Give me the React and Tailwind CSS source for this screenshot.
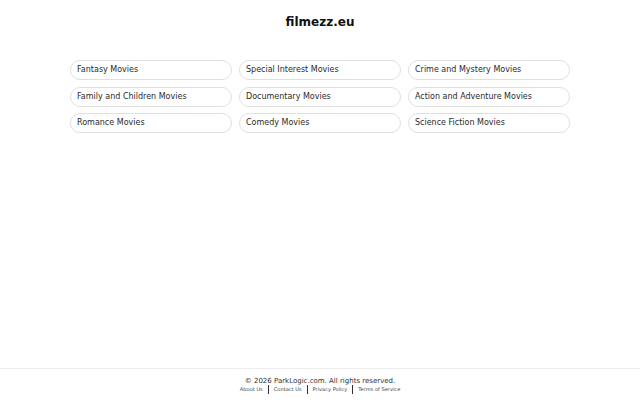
import React from "react";

const categories = [
    "Fantasy Movies",
    "Special Interest Movies",
    "Crime and Mystery Movies",
    "Family and Children Movies",
    "Documentary Movies",
    "Action and Adventure Movies",
    "Romance Movies",
    "Comedy Movies",
    "Science Fiction Movies",
];

const links = ["About Us", "Contact Us", "Privacy Policy", "Terms of Service"];

function App() {
    return (
        <div className="flex flex-col min-h-screen bg-white text-[#222] font-['DejaVu_Sans',sans-serif]">
            <main className="flex-grow">
                <h1 className="text-center font-bold text-[12px] leading-[16px] pt-[14px] text-[#111]">filmezz.eu</h1>

                <div className="w-[500px] mx-auto mt-[30px] grid grid-cols-3 gap-x-[7px] gap-y-[6.5px]">
                    {categories.map((c) => (
                        <a
                            key={c}
                            href="#"
                            className="h-[20px] flex items-center px-[6px] rounded-full border border-[#e0e0e0] text-[8px] text-[#2a2a2a]"
                        >
                            {c}
                        </a>
                    ))}
                </div>
            </main>

            <footer className="border-t border-[#eeeeee] h-[32px] flex flex-col items-center pt-[7px]">
                <p className="text-[7px] text-[#333] leading-[10px]">© 2026 ParkLogic.com. All rights reserved.</p>
                <div className="flex items-center text-[5.1px] text-[#444] leading-[7px] -mt-[1px]">
                    {links.map((l, i) => (
                        <React.Fragment key={l}>
                            {i > 0 && <span className="mx-[5px] w-px h-[9px] bg-[#333]"></span>}
                            <a href="#">{l}</a>
                        </React.Fragment>
                    ))}
                </div>
            </footer>
        </div>
    );
}

export default App;
